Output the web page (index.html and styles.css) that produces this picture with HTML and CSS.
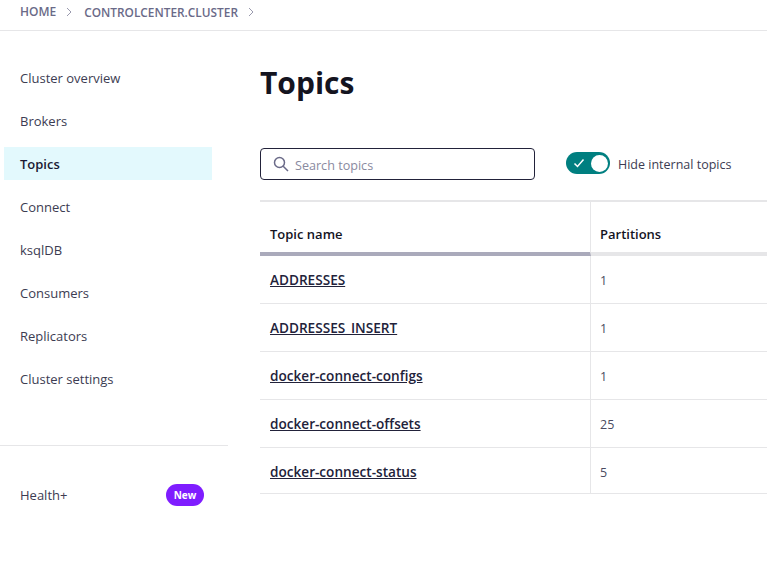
FILE: index.html
```html
<!DOCTYPE html>
<html lang="en">
<head>
<meta charset="utf-8">
<title>Topics</title>
<link rel="stylesheet" href="styles.css">
</head>
<body>
<header class="crumbs">
  <span class="crumb">HOME</span>
  <svg class="chev" viewBox="0 0 8 10"><path d="M2 1l4 4-4 4"/></svg>
  <span class="crumb wide">CONTROLCENTER.CLUSTER</span>
  <svg class="chev" viewBox="0 0 8 10"><path d="M2 1l4 4-4 4"/></svg>
</header>
<div class="shell">
  <nav class="side">
    <ul class="nav">
      <li class="nav-item">Cluster overview</li>
      <li class="nav-item">Brokers</li>
      <li class="nav-item active">Topics</li>
      <li class="nav-item">Connect</li>
      <li class="nav-item">ksqlDB</li>
      <li class="nav-item">Consumers</li>
      <li class="nav-item">Replicators</li>
      <li class="nav-item">Cluster settings</li>
    </ul>
    <div class="health">
      <span>Health+</span>
      <span class="badge">New</span>
    </div>
  </nav>
  <main class="main">
    <h1 class="title">Topics</h1>
    <div class="tools">
      <label class="search">
        <svg class="search-icon" viewBox="0 0 16 16"><circle cx="6.5" cy="6.5" r="5"/><path d="M10.2 10.2L15 15"/></svg>
        <span class="placeholder">Search topics</span>
      </label>
      <div class="toggle-wrap">
        <span class="toggle">
          <svg class="check" viewBox="0 0 12 10"><path d="M1.5 5.5L4.5 8.5 10.5 1.5"/></svg>
          <span class="knob"></span>
        </span>
        <span class="toggle-label">Hide internal topics</span>
      </div>
    </div>
    <table class="table">
      <thead>
        <tr><th class="sorted">Topic name</th><th>Partitions</th></tr>
      </thead>
      <tbody>
        <tr><td><a href="#">ADDRESSES</a></td><td>1</td></tr>
        <tr><td><a href="#">ADDRESSES_INSERT</a></td><td>1</td></tr>
        <tr><td><a href="#">docker-connect-configs</a></td><td>1</td></tr>
        <tr><td><a href="#">docker-connect-offsets</a></td><td>25</td></tr>
        <tr class="last"><td><a href="#">docker-connect-status</a></td><td>5</td></tr>
      </tbody>
    </table>
  </main>
</div>
</body>
</html>
```
FILE: styles.css
```css
* { box-sizing: border-box; }
html, body { margin: 0; height: 100%; overflow: hidden; }
body {
  background: #fff;
  color: #22223a;
  font-family: "Open Sans", "Noto Sans", sans-serif;
  font-size: 13px;
}
.crumbs {
  height: 31px;
  border-bottom: 1px solid #e6e6e8;
  padding: 0 0 7px 20px;
  display: flex;
  align-items: center;
  gap: 9px;
}
.crumb { font-size: 12px; font-weight: 600; color: #6a6a88; }
.crumb.wide { font-size: 11.85px; }
.chev { width: 8px; height: 10px; fill: none; stroke: #9a9aae; stroke-width: 1; margin-right: 2px; }
.shell { display: flex; }
.side { width: 228px; flex: none; padding-top: 30px; }
.nav { list-style: none; margin: 0; padding: 0 16px 0 4px; display: flex; flex-direction: column; gap: 10px; }
.nav-item { height: 33px; line-height: 35px; padding-left: 16px; color: #3c3c52; }
.nav-item.active { background: #e3f9fd; font-weight: 600; color: #1a1a33; }
.health {
  margin-top: 50px;
  border-top: 1px solid #e6e6e8;
  padding: 38px 24px 0 20px;
  display: flex;
  justify-content: space-between;
  align-items: center;
  color: #3c3c52;
}
.badge {
  width: 38px; height: 22px; border-radius: 11px;
  background: #7f1dff; color: #fff;
  font-size: 10px; font-weight: 700;
  display: flex; align-items: center; justify-content: center;
}
.main { flex: 1; min-width: 0; padding-left: 32px; }
.title { margin: 30px 0 0; font-size: 30px; line-height: 44px; font-weight: 700; color: #14141f; }
.tools { margin-top: 43px; display: flex; align-items: center; }
.search {
  width: 275px; height: 32px;
  border: 1px solid #22223a; border-radius: 4px;
  display: flex; align-items: center; gap: 6px; padding-left: 12px;
}
.search-icon { width: 16px; height: 16px; fill: none; stroke: #6a6a88; stroke-width: 1.5; }
.placeholder { color: #8a8aa0; font-size: 12.6px; position: relative; top: 1px; }
.toggle-wrap { margin-left: 31px; display: flex; align-items: center; gap: 8px; color: #3c3c52; }
.toggle-label { font-size: 12.5px; }
.toggle {
  width: 44px; height: 22px; border-radius: 11px;
  background: #007f80;
  display: flex; align-items: center; justify-content: space-between;
  padding: 0 2px 0 7px;
  position: relative; top: -1px;
}
.check { width: 12px; height: 10px; fill: none; stroke: #fff; stroke-width: 1.5; }
.knob { width: 17px; height: 17px; border-radius: 50%; background: #fff; }
.table {
  margin-top: 20px; width: 507px;
  border-collapse: separate; border-spacing: 0;
  border-top: 2px solid #e6e6e8;
  table-layout: fixed;
}
.table th:first-child, .table td:first-child { width: 331px; border-right: 1px solid #e6e6e8; }
.table th {
  height: 54px; padding: 13px 0 0 10px; text-align: left;
  font-weight: 600; font-size: 13px; color: #14141f;
  border-bottom: 4px solid #e6e6e8;
}
.table th + th { padding-left: 9px; }
.table th.sorted { border-bottom-color: #aaaabb; }
.table td {
  height: 48px; padding: 1px 0 0 10px;
  border-bottom: 1px solid #e6e6e8;
  color: #4a4a60; font-size: 12.5px;
}
.table td + td { padding-left: 9px; }
.table tr.last td { height: 46px; padding-top: 3px; }
.table a { color: #22223a; font-weight: 600; font-size: 13.6px; position: relative; top: -1px; }
```
